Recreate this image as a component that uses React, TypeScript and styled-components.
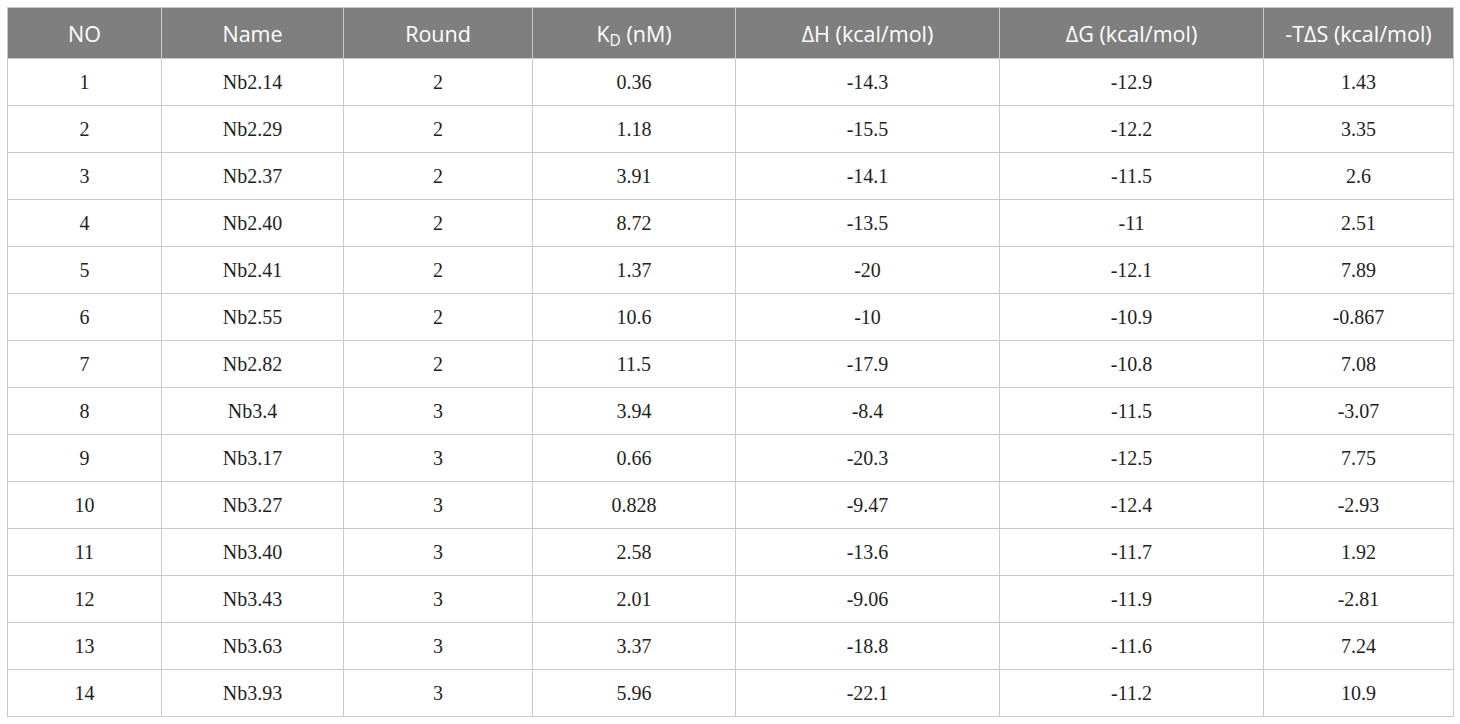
import React from "react";
import styled, { createGlobalStyle } from "styled-components";

const Global = createGlobalStyle`
  html, body { margin: 0; padding: 0; background: #ffffff; }
`;

const Page = styled.div`
  padding: 7px 8px 0 7px;
`;

const Table = styled.table`
  width: 1446px;
  border-collapse: collapse;
  table-layout: fixed;
  border: 1px solid #c9c9c9;
`;

const HeadCell = styled.th`
  height: 50px;
  padding: 0;
  background: #7f7f7f;
  color: #ffffff;
  font-family: "Open Sans", "Noto Sans", sans-serif;
  font-weight: 400;
  font-size: 21.5px;
  text-align: center;
  vertical-align: middle;
  border: 1px solid #c9c9c9;
  border-top: none;
  sub {
    font-size: 0.72em;
    vertical-align: -0.25em;
    line-height: 0;
  }
`;

const Cell = styled.td`
  height: 46px;
  padding: 0;
  color: #231f20;
  font-family: "Liberation Serif", "Times New Roman", serif;
  font-size: 20px;
  text-align: center;
  vertical-align: middle;
  border: 1px solid #c9c9c9;
`;

const widths = [154, 182, 189, 203, 264, 264, 190];

const rows: string[][] = [
  ["1", "Nb2.14", "2", "0.36", "-14.3", "-12.9", "1.43"],
  ["2", "Nb2.29", "2", "1.18", "-15.5", "-12.2", "3.35"],
  ["3", "Nb2.37", "2", "3.91", "-14.1", "-11.5", "2.6"],
  ["4", "Nb2.40", "2", "8.72", "-13.5", "-11", "2.51"],
  ["5", "Nb2.41", "2", "1.37", "-20", "-12.1", "7.89"],
  ["6", "Nb2.55", "2", "10.6", "-10", "-10.9", "-0.867"],
  ["7", "Nb2.82", "2", "11.5", "-17.9", "-10.8", "7.08"],
  ["8", "Nb3.4", "3", "3.94", "-8.4", "-11.5", "-3.07"],
  ["9", "Nb3.17", "3", "0.66", "-20.3", "-12.5", "7.75"],
  ["10", "Nb3.27", "3", "0.828", "-9.47", "-12.4", "-2.93"],
  ["11", "Nb3.40", "3", "2.58", "-13.6", "-11.7", "1.92"],
  ["12", "Nb3.43", "3", "2.01", "-9.06", "-11.9", "-2.81"],
  ["13", "Nb3.63", "3", "3.37", "-18.8", "-11.6", "7.24"],
  ["14", "Nb3.93", "3", "5.96", "-22.1", "-11.2", "10.9"],
];

export default function App() {
  return (
    <>
      <Global />
      <Page>
        <Table>
          <colgroup>
            {widths.map((w, i) => (
              <col key={i} style={{ width: w }} />
            ))}
          </colgroup>
          <thead>
            <tr>
              <HeadCell>NO</HeadCell>
              <HeadCell>Name</HeadCell>
              <HeadCell>Round</HeadCell>
              <HeadCell>
                K<sub>D</sub> (nM)
              </HeadCell>
              <HeadCell>ΔH (kcal/mol)</HeadCell>
              <HeadCell>ΔG (kcal/mol)</HeadCell>
              <HeadCell>-TΔS (kcal/mol)</HeadCell>
            </tr>
          </thead>
          <tbody>
            {rows.map((r, i) => (
              <tr key={i}>
                {r.map((c, j) => (
                  <Cell key={j}>{c}</Cell>
                ))}
              </tr>
            ))}
          </tbody>
        </Table>
      </Page>
    </>
  );
}
